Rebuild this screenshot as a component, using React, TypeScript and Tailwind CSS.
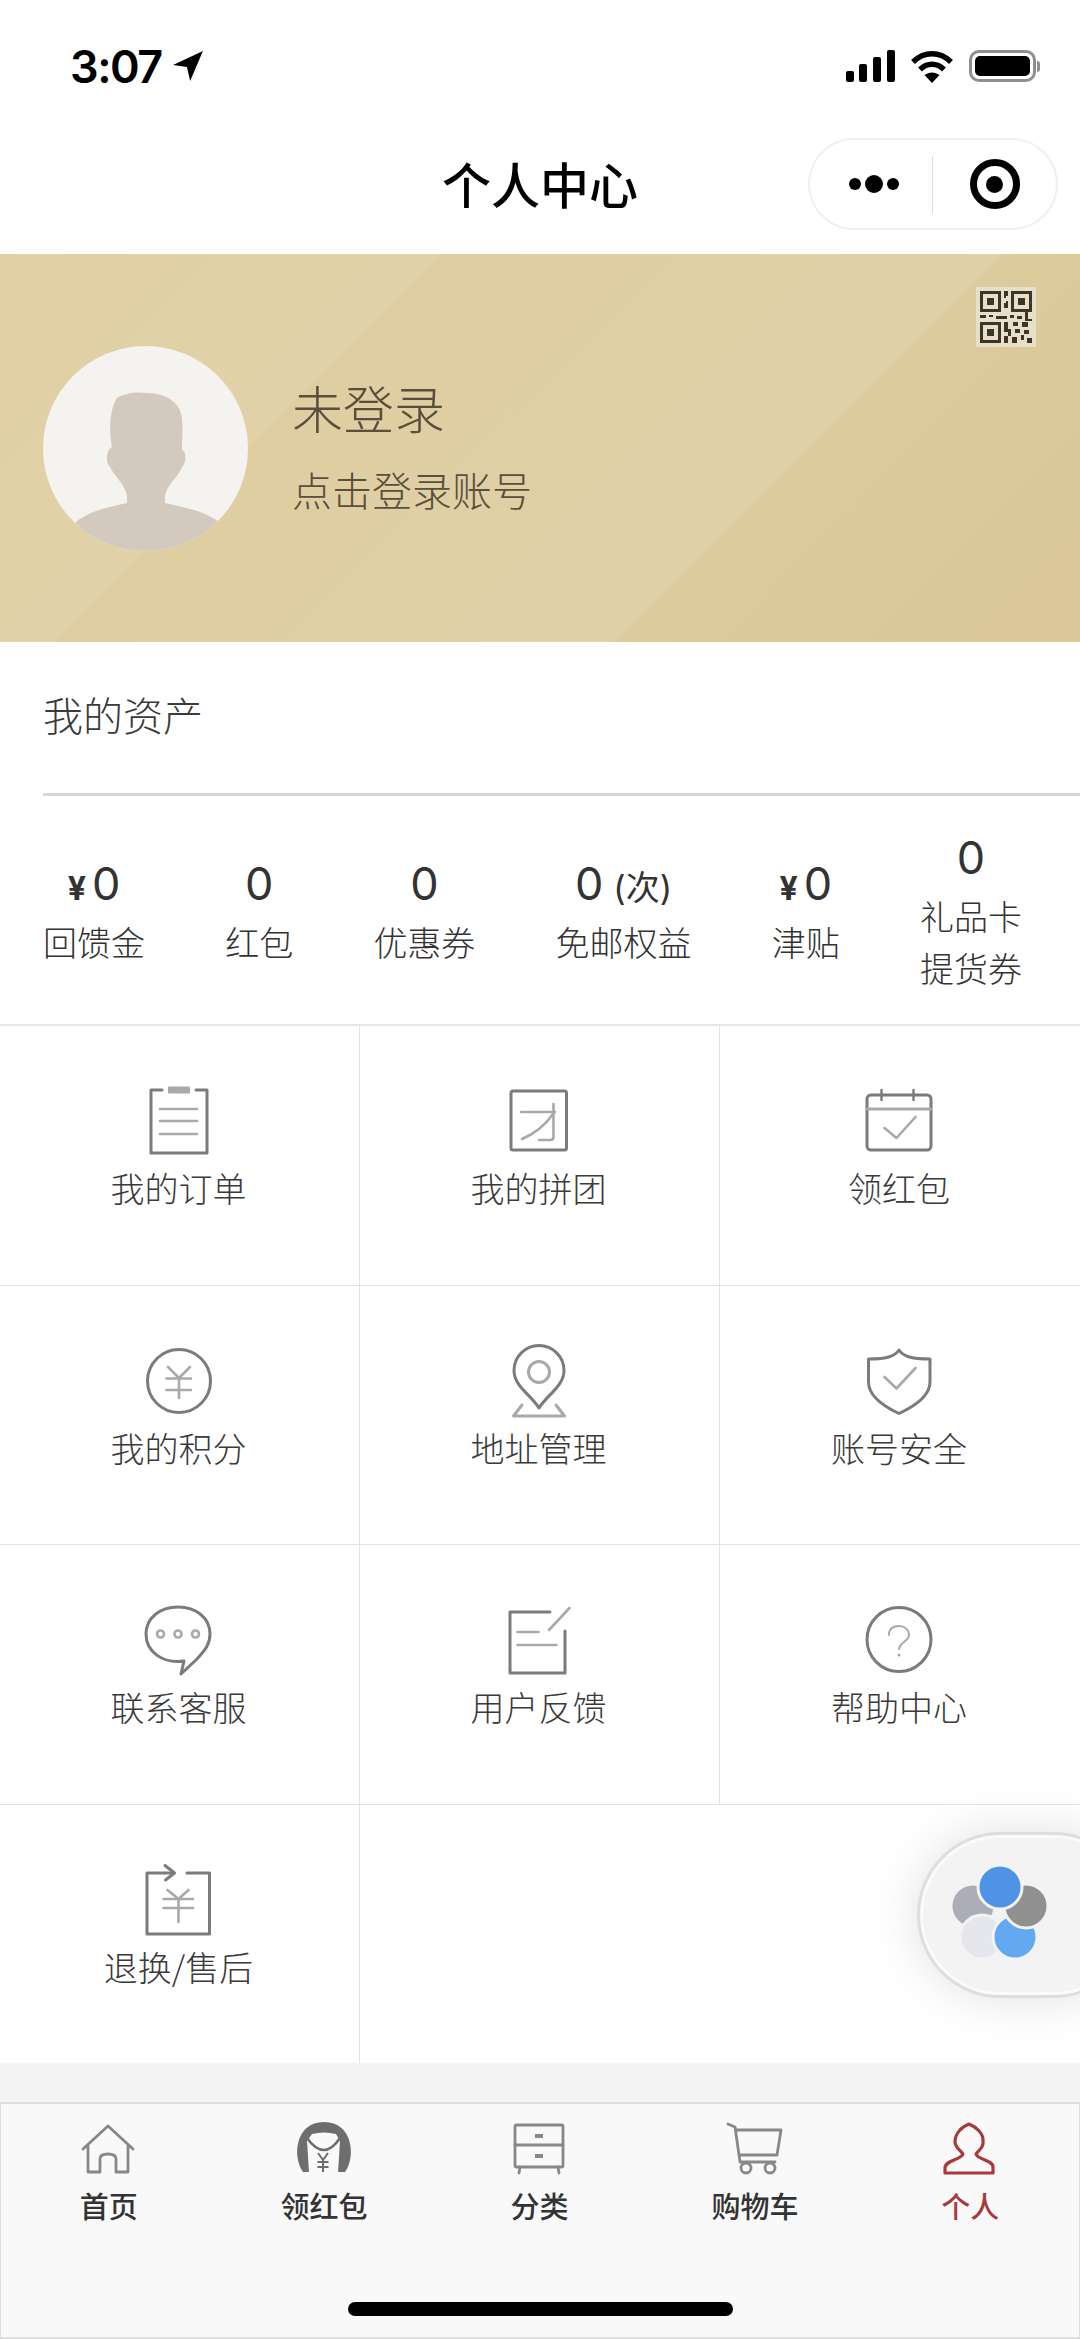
import React from "react";

const stroke = { fill: "none", stroke: "#7b7b7b", strokeWidth: 3, strokeLinejoin: "round" as const, strokeLinecap: "round" as const };
const inner = { fill: "none", stroke: "#a9a9a9", strokeWidth: 2.6, strokeLinecap: "round" as const, strokeLinejoin: "round" as const };

const Icon = ({ children }: { children: React.ReactNode }) => (
  <svg viewBox="0 0 72 72" className="w-[72px] h-[72px] overflow-visible">{children}</svg>
);

const menu: { label: string; icon: React.ReactNode }[] = [
  {
    label: "我的订单",
    icon: (
      <Icon>
        <path d="M19 5H8v63h56V5H53" {...stroke} />
        <rect x="25" y="1.5" width="22" height="7" rx="1" fill="#a9a9a9" />
        <path d="M17 24H54M17 36H54M17 49H54" {...inner} />
      </Icon>
    ),
  },
  {
    label: "我的拼团",
    icon: (
      <Icon>
        <rect x="8" y="6" width="55.5" height="59" rx="2" {...stroke} />
        <path d="M18 27H52M50.5 19V52Q50.5 55 47 55H36M50 29Q38 46 19 54" {...inner} />
      </Icon>
    ),
  },
  {
    label: "领红包",
    icon: (
      <Icon>
        <rect x="4" y="10" width="64" height="55" rx="4" {...stroke} />
        <path d="M18.5 5V15M50.5 5V15" {...stroke} strokeWidth={2.4} />
        <path d="M4 24H68" {...inner} strokeWidth={3.2} />
        <path d="M21.5 43L33.5 53L52.5 32" {...inner} />
      </Icon>
    ),
  },
  {
    label: "我的积分",
    icon: (
      <Icon>
        <circle cx="36" cy="36" r="31.5" {...stroke} />
        <path d="M25 22L36 33L47 22M23.5 33.5H48M23.5 45H48M36 33V53" {...inner} />
      </Icon>
    ),
  },
  {
    label: "地址管理",
    icon: (
      <Icon>
        <path d="M36 63C28 50 11 41 11 25.5A25 25 0 0 1 61 25.5C61 41 44 50 36 63Z" {...stroke} />
        <circle cx="36" cy="27" r="10.5" {...inner} strokeWidth={3} />
        <path d="M19 60L10.5 71H61.5L53 60" {...inner} strokeWidth={3} />
      </Icon>
    ),
  },
  {
    label: "账号安全",
    icon: (
      <Icon>
        <path d="M36 5C40 11 47 14 67 14V37C67 52 50 62 36 68.5C22 62 5.5 52 5.5 37V14C25 14 32 11 36 5Z" {...stroke} />
        <path d="M21.5 32L33.5 43.5L52.5 23" {...inner} />
      </Icon>
    ),
  },
  {
    label: "联系客服",
    icon: (
      <Icon>
        <path d="M41 57C20 60 3 48 3 30C3 14 17 3 35 3C53 3 67 14 67 30C67 42 60 48 54 55L38 70L41 57Z" {...stroke} />
        <circle cx="17.5" cy="30" r="3.5" {...inner} />
        <circle cx="35" cy="30" r="3.5" {...inner} />
        <circle cx="52.5" cy="30" r="3.5" {...inner} />
      </Icon>
    ),
  },
  {
    label: "用户反馈",
    icon: (
      <Icon>
        <path d="M47 8H7V69H62V27" {...stroke} />
        <path d="M46 26L66.5 4M14.5 28H35.5M14.5 41H53.5" {...inner} />
      </Icon>
    ),
  },
  {
    label: "帮助中心",
    icon: (
      <Icon>
        <circle cx="36" cy="35.5" r="32" {...stroke} />
        <path d="M26 31C26 25 30 22 36 22C42 22 46 26 46 31C46 37 37 38 36 45" {...inner} strokeWidth={2} />
        <circle cx="36" cy="51" r="1.6" fill="#a9a9a9" />
      </Icon>
    ),
  },
  {
    label: "退换/售后",
    icon: (
      <Icon>
        <path d="M44 9H66.5V70H4V9H31" {...stroke} />
        <path d="M22 1.5L31.5 9L22.5 16" {...stroke} />
        <path d="M24.5 26L35.5 35L45.5 26M20.5 35H50M20.5 44H50M35.5 35V58" {...inner} />
      </Icon>
    ),
  },
];

const tabStroke = { fill: "none", stroke: "#888", strokeWidth: 2.8, strokeLinejoin: "round" as const, strokeLinecap: "round" as const };

const tabs: { label: string; active?: boolean; icon: React.ReactNode }[] = [
  {
    label: "首页",
    icon: <path d="M4 28L29 5L54 28M9 24V51H21V38Q21 33 29 33Q37 33 37 38V51H49V24" {...tabStroke} />,
  },
  {
    label: "领红包",
    icon: (
      <>
        <path d="M9 51C-2 36 1 1 30 1C59 1 62 36 51 51Z" fill="#6e6e6e" />
        <path d="M18 13Q30 10 42 13L46 20L44 52H15L13 20Z" fill="#f9f9f9" />
        <path d="M13 17Q30 41 46 17" fill="none" stroke="#6e6e6e" strokeWidth={2.6} />
        <path d="M24 32L29 39L34 32M23.5 41H34.5M23.5 46H34.5M29 39V51" fill="none" stroke="#6e6e6e" strokeWidth={2} />
      </>
    ),
  },
  {
    label: "分类",
    icon: (
      <>
        <rect x="6" y="4" width="48" height="42" rx="1.5" {...tabStroke} />
        <path d="M6 24H54M11 46L10 52M49 46L50 52" {...tabStroke} />
        <rect x="26" y="13" width="8" height="4" fill="#888" />
        <rect x="26" y="33" width="8" height="4" fill="#888" />
      </>
    ),
  },
  {
    label: "购物车",
    icon: (
      <>
        <path d="M3 3L10 6L15 41H50M11 9H56L52 34H14" {...tabStroke} />
        <circle cx="21" cy="47" r="5" {...tabStroke} />
        <circle cx="45" cy="47" r="5" {...tabStroke} />
      </>
    ),
  },
  {
    label: "个人",
    active: true,
    icon: (
      <path
        d="M29 3C21 6 15 13 15 21C15 26 19 28 23 33C21 39 5 39 5 47V52H53V46C53 39 38 39 36 33C40 28 44 26 43 19C43 12 36 6 29 3Z"
        fill="none"
        stroke="#a83a3c"
        strokeWidth={3.2}
        strokeLinejoin="round"
      />
    ),
  },
];

const stats = [
  { pre: "¥", num: "0", label: ["回馈金"] },
  { num: "0", label: ["红包"] },
  { num: "0", label: ["优惠券"] },
  { num: "0", post: "(次)", label: ["免邮权益"] },
  { pre: "¥", num: "0", label: ["津贴"] },
  { num: "0", label: ["礼品卡", "提货券"] },
];

const QrCode = () => (
  <svg viewBox="0 0 52 52" className="w-[52px] h-[52px]" fill="#3f3527">
    <path d="M0 0H21V21H0ZM3 3V18H18V3ZM7 7H14V14H7Z" fillRule="evenodd" />
    <path d="M31 0H52V21H31ZM34 3V18H49V3ZM38 7H45V14H38Z" fillRule="evenodd" />
    <path d="M0 31H21V52H0ZM3 34V49H18V34ZM7 38H14V45H7Z" fillRule="evenodd" />
    <path d="M24 0H28V5H26V10H28V17H24V12H26V7H24ZM0 24H6V27H0ZM9 24H13V26H9ZM16 25H27V28H16ZM30 24H34V27H30ZM37 25H42V28H37ZM45 21H48V28H52V30H45Z" />
    <path d="M24 31H28V38H31V45H28V41H24ZM24 45H28V52H24ZM33 31H38V35H33ZM42 31H48V36H42ZM35 38H40V42H35ZM44 39H49V43H44ZM32 46H37V52H32ZM41 44H44V49H41ZM47 47H52V52H47Z" />
  </svg>
);

export default function App() {
  return (
    <div className="relative w-[1080px] h-[2339px] overflow-hidden bg-white font-['Noto_Sans_CJK_SC',sans-serif] flex flex-col">
      {/* status bar */}
      <div className="h-[132px] flex items-center justify-between pl-[70px] pr-[40px] shrink-0">
        <div className="flex items-center gap-[10px]">
          <span className="text-[45px] leading-none font-semibold text-black font-['Inter',sans-serif] tracking-[-1.5px]">3:07</span>
          <svg viewBox="0 0 30 30" className="w-[32px] h-[32px]">
            <path d="M29 1L17 29L14 16L1 14Z" fill="#000" />
          </svg>
        </div>
        <div className="flex items-center gap-[15px]">
          <svg viewBox="0 0 49 32" className="w-[49px] h-[32px]" fill="#000">
            <rect x="0" y="21" width="8" height="11" rx="2" />
            <rect x="13" y="14" width="8" height="18" rx="2" />
            <rect x="27" y="7" width="8" height="25" rx="2" />
            <rect x="41" y="0" width="8" height="32" rx="2" />
          </svg>
          <svg viewBox="0 0 44 33" className="w-[44px] h-[33px]">
            <path d="M3 12C14 1 30 1 41 12M10 19.5C17 12.5 27 12.5 34 19.5" fill="none" stroke="#000" strokeWidth={5.5} />
            <path d="M14.5 25C19 21.5 25 21.5 29.5 25L22 33Z" fill="#000" />
          </svg>
          <div className="flex items-center">
            <div className="w-[67px] h-[32px] rounded-[10px] border-[3px] border-[#8f8f8f] p-[3px]">
              <div className="w-full h-full bg-black rounded-[5px]" />
            </div>
            <div className="w-[3px] h-[11px] ml-[1px] bg-[#8f8f8f] rounded-r-full" />
          </div>
        </div>
      </div>

      {/* nav bar */}
      <div className="relative h-[122px] shrink-0 flex items-center justify-center pb-[22px]">
        <span className="text-[49px] leading-none font-medium text-black">个人中心</span>
        <div className="absolute right-[22px] top-[6px] w-[250px] h-[92px] rounded-full border-2 border-[#f0f0f0] bg-white flex items-center">
          <div className="w-[122px] flex items-center justify-center gap-[4px] pl-[6px]">
            <div className="w-[12px] h-[12px] rounded-full bg-black" />
            <div className="w-[18px] h-[18px] rounded-full bg-black" />
            <div className="w-[12px] h-[12px] rounded-full bg-black" />
          </div>
          <div className="w-px h-[57px] bg-[#dcdcdc]" />
          <div className="flex-1 flex items-center justify-center">
            <div className="w-[50px] h-[50px] rounded-full border-[7px] border-black flex items-center justify-center">
              <div className="w-[17px] h-[17px] rounded-full bg-black" />
            </div>
          </div>
        </div>
      </div>

      {/* profile banner */}
      <div className="relative h-[388px] shrink-0 flex items-center pl-[43px] gap-[44px] bg-[linear-gradient(135deg,#e0cfa2_0%,#e1d2a9_29.8%,#dfcea1_30.2%,#dfd0a8_68%,#dccb9c_68.6%,#dac696_100%)]">
        <div className="w-[205px] h-[205px] rounded-full bg-[#f5f3f0] overflow-hidden">
          <svg viewBox="0 0 205 205" className="w-full h-full">
            <path
              d="M74 52C84 46 96 46 104 47C124 47 139 58 139 74C140 86 139 92 139 104C144 105 143 118 139 121C136 130 124 138 122 150V157C140 161 162 165 176 176L190 210H15L33 176C46 165 66 161 84 157V150C82 138 71 130 67 121C62 116 63 104 69 101C66 88 66 64 74 52Z"
              fill="#d3c9bf"
            />
          </svg>
        </div>
        <div className="flex flex-col text-[#5a4e3c] font-light">
          <span className="text-[51px] leading-[60px] -mt-[6px]">未登录</span>
          <span className="text-[40px] leading-[48px] mt-[28px]">点击登录账号</span>
        </div>
        <div className="absolute top-[33px] right-[44px] w-[60px] h-[60px] bg-[#e8dfca] flex items-center justify-center">
          <QrCode />
        </div>
      </div>

      {/* assets */}
      <div className="h-[151px] shrink-0 pl-[43px] pb-[8px] flex items-center text-[40px] leading-none font-light text-[#3a3a3a]">我的资产</div>
      <div className="ml-[43px] h-[3px] shrink-0 bg-[#d8d8d8]" />
      <div className="h-[228px] shrink-0 flex items-center justify-between pl-[43px] pr-[58px] text-[#333]">
        {stats.map((s, i) => (
          <div key={i} className="flex flex-col items-center">
            <div className="flex items-baseline h-[56px] leading-[56px] text-[45px] mt-[3px] mb-[4px] font-['Inter','Noto_Sans_CJK_SC',sans-serif]">
              {s.pre && <span className="text-[32px] font-bold mr-[6px]">{s.pre}</span>}
              <span>{s.num}</span>
              {s.post && <span className="text-[34px] ml-[10px]">{s.post}</span>}
            </div>
            {s.label.map((l) => (
              <span key={l} className="text-[34px] leading-[52px] font-light whitespace-nowrap">{l}</span>
            ))}
          </div>
        ))}
      </div>

      {/* menu grid */}
      <div className="grid grid-cols-3 auto-rows-[259.5px] h-[1039px] shrink-0 border-t-2 border-[#e6e6e6]">
        {menu.map((m) => (
          <div key={m.label} className="flex flex-col items-center pt-[59px] pr-[2px] border-r border-b border-[#e3e3e3] nth-[3n]:border-r-0 last:border-b-0">
            {m.icon}
            <span className="mt-[9px] text-[34px] leading-[44px] font-light text-[#3a3a3a] whitespace-nowrap">{m.label}</span>
          </div>
        ))}
      </div>

      <div className="h-[39px] shrink-0 bg-[#f3f3f3]" />

      {/* tab bar */}
      <div className="relative flex-1 grid grid-cols-5 items-start bg-[#f9f9f9] border-x border-y-2 border-[#dedede] pt-[17px] pr-[1px]">
        {tabs.map((t) => (
          <div key={t.label} className="flex flex-col items-center">
            <svg viewBox="0 0 60 56" className="w-[60px] h-[56px] overflow-visible">{t.icon}</svg>
            <span className={`mt-[10px] text-[29px] leading-[36px] font-medium ${t.active ? "text-[#a83a3c]" : "text-[#333]"}`}>{t.label}</span>
          </div>
        ))}
        <div className="absolute left-[347px] bottom-[21px] w-[385px] h-[14px] rounded-full bg-black" />
      </div>

      {/* floating assistant button */}
      <div className="absolute left-[917px] top-[1832px] w-[220px] h-[166px] rounded-full bg-[#f3f3f3] border-[3px] border-[#dedede] shadow-[0_0_50px_rgba(0,0,0,0.12),inset_0_0_0_3px_#fafafa] flex items-center pl-[26px] pb-[2px]">
        <svg viewBox="0 0 104 104" className="w-[104px] h-[104px] overflow-visible">
          <circle cx="27" cy="44" r="22" fill="#adadb8" stroke="#f3f3f3" strokeWidth={3} />
          <circle cx="36" cy="75" r="22" fill="#e6e7ec" stroke="#f3f3f3" strokeWidth={3} />
          <circle cx="69" cy="75" r="22" fill="#64a8f2" stroke="#f3f3f3" strokeWidth={3} />
          <circle cx="80" cy="44" r="22" fill="#909090" stroke="#f3f3f3" strokeWidth={3} />
          <circle cx="54" cy="25" r="22" fill="#4f93e6" stroke="#f3f3f3" strokeWidth={3} />
        </svg>
      </div>
    </div>
  );
}
